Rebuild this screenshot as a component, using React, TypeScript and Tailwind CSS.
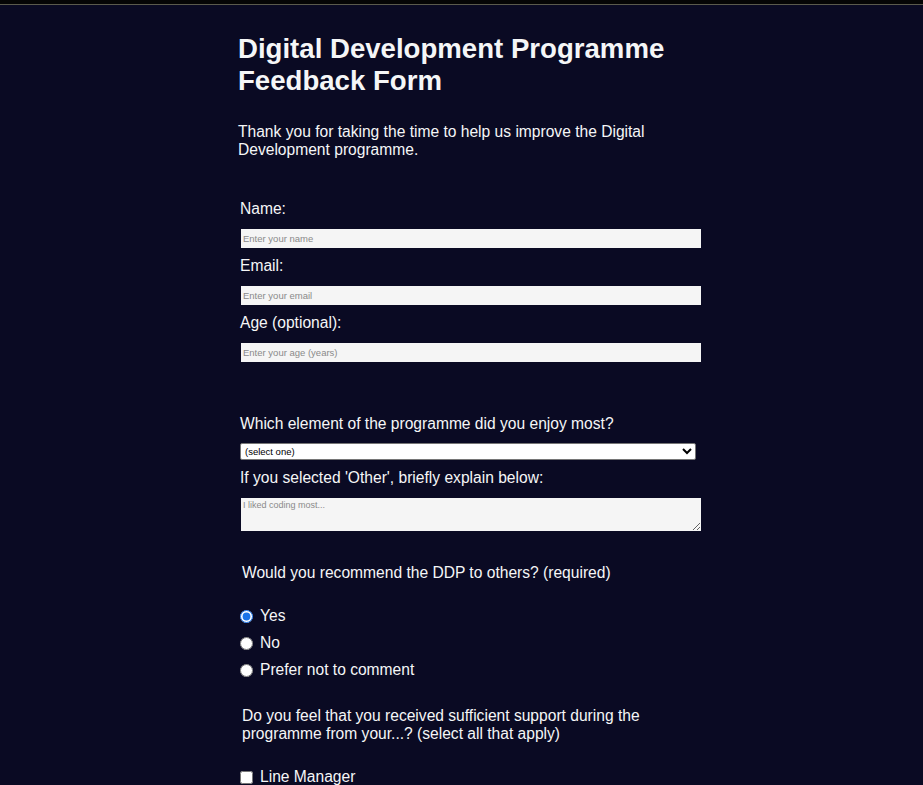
import { useState } from "react";

const recommendOptions = ["Yes", "No", "Prefer not to comment"];

export default function App() {
  const [recommend, setRecommend] = useState("Yes");

  return (
    <div className="min-h-[785px] bg-[#0a0a23] text-[#f5f6f7] font-['Liberation_Sans',Arial,sans-serif]">
      {/* top strip */}
      <div className="h-[4px] bg-[#050505]" />
      <div className="h-px bg-[#5b5a4c]" />

      <div className="pl-[238px] w-[703px]">
        <h1 className="mt-[28px] text-[27.6px] font-bold leading-[32px]">
          Digital Development Programme Feedback Form
        </h1>
        <p className="mt-[26px] text-[15.6px] leading-[18px] w-[440px]">
          Thank you for taking the time to help us improve the Digital Development programme.
        </p>

        <form className="mt-[41px]">
          <div className="pl-[2px]">
            <label className="block text-[15.6px] leading-[18px]">Name:</label>
            <input
              type="text"
              placeholder="Enter your name"
              className="block mt-[11px] ml-px w-[460px] h-[19px] bg-[#f5f5f5] text-[9.5px] text-black px-[2px] placeholder:text-[#8a8a8a] outline-none"
            />
            <label className="block mt-[9px] text-[15.6px] leading-[18px]">Email:</label>
            <input
              type="email"
              placeholder="Enter your email"
              className="block mt-[11px] ml-px w-[460px] h-[19px] bg-[#f5f5f5] text-[9.5px] text-black px-[2px] placeholder:text-[#8a8a8a] outline-none"
            />
            <label className="block mt-[9px] text-[15.6px] leading-[18px]">Age (optional):</label>
            <input
              type="number"
              placeholder="Enter your age (years)"
              className="block mt-[11px] ml-px w-[460px] h-[19px] bg-[#f5f5f5] text-[9.5px] text-black px-[2px] placeholder:text-[#8a8a8a] outline-none"
            />

            <label className="block mt-[53px] text-[15.6px] leading-[18px]">
              Which element of the programme did you enjoy most?
            </label>
            <select
              defaultValue=""
              className="block mt-[10px] w-[456px] h-[17px] bg-white text-black text-[9.5px] border border-[#767676] rounded-[2px] pl-0"
            >
              <option value="">(select one)</option>
              <option value="coding">Coding</option>
              <option value="projects">Projects</option>
              <option value="other">Other</option>
            </select>
            <label className="block mt-[9px] text-[15.6px] leading-[18px]">
              If you selected 'Other', briefly explain below:
            </label>
            <textarea
              placeholder="I liked coding most..."
              className="block mt-[11px] ml-px w-[460px] h-[33px] bg-[#f5f5f5] text-black text-[9px] leading-[11px] px-[2px] py-[2px] placeholder:text-[#8a8a8a] outline-none"
            />
          </div>

          <fieldset className="mt-[33px]">
            <legend className="pl-[4px] text-[15.6px] leading-[18px]">
              Would you recommend the DDP to others? (required)
            </legend>
            <div className="mt-[25px] flex flex-col gap-[9px] pl-[2px]">
              {recommendOptions.map((opt) => (
                <label key={opt} className="flex items-center gap-[7px] text-[15.6px] leading-[18px]">
                  <input
                    type="radio"
                    name="recommend"
                    checked={recommend === opt}
                    onChange={() => setRecommend(opt)}
                    className="m-0 w-[13px] h-[13px] accent-[#1a73e8]"
                  />
                  {opt}
                </label>
              ))}
            </div>
          </fieldset>

          <fieldset className="mt-[28px]">
            <legend className="pl-[4px] w-[420px] text-[15.6px] leading-[18px]">
              Do you feel that you received sufficient support during the programme from your...? (select all that apply)
            </legend>
            <div className="mt-[25px] flex flex-col gap-[9px] pl-[2px]">
              <label className="flex items-center gap-[7px] text-[15.6px] leading-[18px]">
                <input type="checkbox" className="m-0 w-[13px] h-[13px]" />
                Line Manager
              </label>
              <label className="flex items-center gap-[7px] text-[15.6px] leading-[18px]">
                <input type="checkbox" className="m-0 w-[13px] h-[13px]" />
                Mentor
              </label>
            </div>
          </fieldset>
        </form>
      </div>
    </div>
  );
}
